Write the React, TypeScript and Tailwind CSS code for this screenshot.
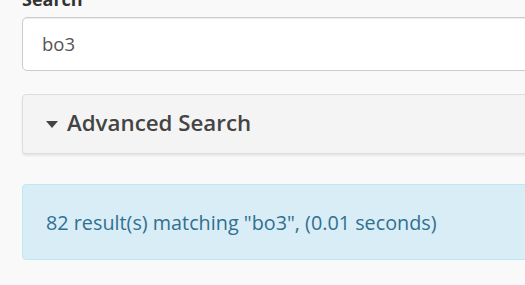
export default function App() {
  return (
    <div
      className="h-[285px] w-[525px] overflow-hidden bg-[#f9f9f9] text-[#333]"
      style={{ fontFamily: '"Open Sans", "Noto Sans", sans-serif' }}
    >
      <div className="-mt-[14px] pl-[22px] w-[560px]">
        {/* Search field */}
        <label className="block h-[26px] text-[18px] font-bold leading-[26px] text-[#333]">Search</label>
        <div className="mt-[5px] flex h-[54px] items-center rounded-[5px] border border-[#ccc] bg-white pl-[19px] shadow-[inset_0_1px_1px_rgba(0,0,0,0.075)]">
          <span className="text-[18.5px] text-[#555]">bo3</span>
        </div>

        {/* Advanced search panel */}
        <div className="mt-[23px] flex h-[60px] items-center rounded-[4px] border border-[#ddd] bg-[#f4f4f4] pl-[23px] shadow-[0_2px_2px_rgba(0,0,0,0.08)]">
          <svg width="12" height="7" viewBox="0 0 12 7" className="mr-[9px]">
            <path d="M0 0 L12 0 L6 7 Z" fill="#444" />
          </svg>
          <span className="-mt-[2px] text-[22.3px] font-semibold text-[#444]">Advanced Search</span>
        </div>

        {/* Result alert */}
        <div className="mt-[30px] flex h-[76px] items-center rounded-[4px] border border-[#bce8f1] bg-[#d9edf7] pl-[23px]">
          <span className="mt-[2px] text-[19.8px] text-[#31708f]">82 result(s) matching "bo3", (0.01 seconds)</span>
        </div>
      </div>
    </div>
  )
}
